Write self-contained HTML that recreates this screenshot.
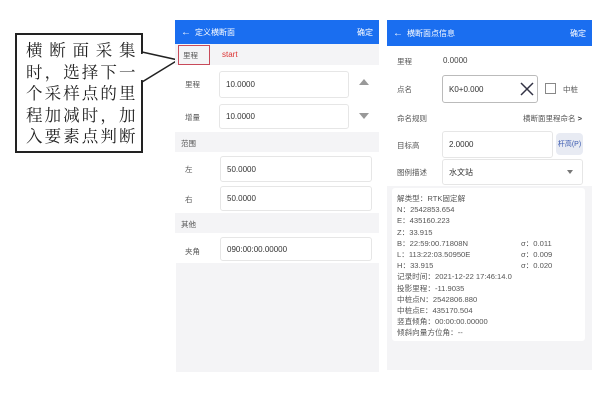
<!DOCTYPE html>
<html><head><meta charset="utf-8"><style>
*{margin:0;padding:0;box-sizing:border-box}
body{width:600px;height:400px;background:#fff;position:relative;overflow:hidden;font-family:"Liberation Sans","Noto Sans CJK SC",sans-serif;font-size:8px;color:#444}
.a{position:absolute}
.hdr{background:#1a6ef0;color:#fff;font-size:8px;display:flex;align-items:center;padding:0 6px}
.inp{position:absolute;border:1px solid #e6e6e6;border-radius:3px;background:#fff;padding-left:6px;display:flex;align-items:center;font-size:8px;color:#333}
.gray{background:#f4f4f6}
.lbl{position:absolute;font-size:7.5px;color:#555}
</style></head><body>
<!-- callout -->
<div class="a" style="left:15px;top:33px;width:128px;height:120px;border:2px solid #222;background:#fff"></div>
<svg class="a" style="left:0;top:0" width="600" height="400"><polygon points="142,52 178,60 142,82" fill="#fff" stroke="#222" stroke-width="1.5"/><rect x="140" y="54" width="4" height="26" fill="#fff"/></svg>
<div class="a" style="left:26px;top:40px;width:110px;font-family:'Liberation Serif','Noto Serif CJK SC',serif;font-size:16.5px;line-height:21.5px;color:#222;letter-spacing:0.5px;text-align:justify;text-align-last:justify">横 断 面 采 集<br>时，选择下一<br>个采样点的里<br>程加减时，加<br>入要素点判断</div>

<!-- left phone -->
<div class="a hdr" style="left:175px;top:20px;width:204px;height:24px"><span style="font-size:10px;margin-right:4px">&#8592;</span>定义横断面<span style="margin-left:auto">确定</span></div>
<div class="a gray" style="left:175px;top:44px;width:204px;height:21px"></div>
<div class="a" style="left:178px;top:45px;width:32px;height:20px;border:1.5px solid #c84a5a"></div>
<div class="lbl" style="left:183px;top:50px">里程</div>
<div class="a" style="left:222px;top:50px;color:#d33;font-size:8px">start</div>
<div class="lbl" style="left:185px;top:79px">里程</div>
<div class="inp" style="left:219px;top:71px;width:130px;height:27px">10.0000</div>
<div class="a" style="left:359px;top:79px;width:0;height:0;border-left:5px solid transparent;border-right:5px solid transparent;border-bottom:6px solid #999"></div>
<div class="lbl" style="left:185px;top:112px">增量</div>
<div class="inp" style="left:219px;top:104px;width:130px;height:25px">10.0000</div>
<div class="a" style="left:359px;top:113px;width:0;height:0;border-left:5px solid transparent;border-right:5px solid transparent;border-top:6px solid #999"></div>
<div class="a gray" style="left:175px;top:132px;width:204px;height:20px"></div>
<div class="lbl" style="left:181px;top:138px">范围</div>
<div class="lbl" style="left:185px;top:164px">左</div>
<div class="inp" style="left:220px;top:156px;width:152px;height:26px">50.0000</div>
<div class="lbl" style="left:185px;top:194px">右</div>
<div class="inp" style="left:220px;top:186px;width:152px;height:25px">50.0000</div>
<div class="a gray" style="left:175px;top:213px;width:204px;height:20px"></div>
<div class="lbl" style="left:181px;top:219px">其他</div>
<div class="lbl" style="left:185px;top:246px">夹角</div>
<div class="inp" style="left:220px;top:237px;width:152px;height:24px">090:00:00.00000</div>
<div class="a gray" style="left:176px;top:263px;width:203px;height:109px"></div>

<!-- right phone -->
<div class="a hdr" style="left:387px;top:20px;width:205px;height:26px"><span style="font-size:10px;margin-right:4px">&#8592;</span>横断面点信息<span style="margin-left:auto">确定</span></div>
<div class="lbl" style="left:397px;top:56px">里程</div>
<div class="a" style="left:443px;top:56px;font-size:8px;color:#444">0.0000</div>
<div class="lbl" style="left:397px;top:84px">点名</div>
<div class="inp" style="left:442px;top:75px;width:96px;height:28px;border-color:#bbb">K0+0.000</div>
<svg class="a" style="left:520px;top:82px" width="14" height="14"><path d="M1 1L13 13M13 1L1 13" stroke="#334" stroke-width="1.5"/></svg>
<div class="a" style="left:545px;top:83px;width:11px;height:11px;border:1px solid #888"></div>
<div class="lbl" style="left:563px;top:84px">中桩</div>
<div class="lbl" style="left:397px;top:113px">命名规则</div>
<div class="lbl" style="left:523px;top:113px">横断面里程命名 <b style="color:#333">&gt;</b></div>
<div class="lbl" style="left:397px;top:140px">目标高</div>
<div class="inp" style="left:442px;top:131px;width:111px;height:27px">2.0000</div>
<div class="a" style="left:556px;top:133px;width:27px;height:22px;background:#e8ebf3;border-radius:4px;color:#3a5ab0;font-size:7px;display:flex;align-items:center;justify-content:center">杆高(P)</div>
<div class="lbl" style="left:397px;top:167px">图例描述</div>
<div class="inp" style="left:442px;top:159px;width:141px;height:26px">水文站</div>
<div class="a" style="left:567px;top:170px;border-left:3px solid transparent;border-right:3px solid transparent;border-top:4px solid #777"></div>
<div class="a gray" style="left:387px;top:186px;width:205px;height:184px"></div>
<div class="a" style="left:392px;top:188px;width:193px;height:153px;background:#fff;border-radius:3px"></div>
<div class="a" style="left:397px;top:193px;font-size:7.6px;line-height:11.2px;color:#555;white-space:pre">解类型：RTK固定解
N：2542853.654
E：435160.223
Z：33.915
B：22:59:00.71808N
L：113:22:03.50950E
H：33.915
记录时间：2021-12-22 17:46:14.0
投影里程：-11.9035
中桩点N：2542806.880
中桩点E：435170.504
竖直倾角：00:00:00.00000
倾斜向量方位角：--</div>
<div class="a" style="left:521px;top:238px;font-size:7.6px;line-height:11.2px;color:#555;white-space:pre">σ：0.011
σ：0.009
σ：0.020</div>
</body></html>
